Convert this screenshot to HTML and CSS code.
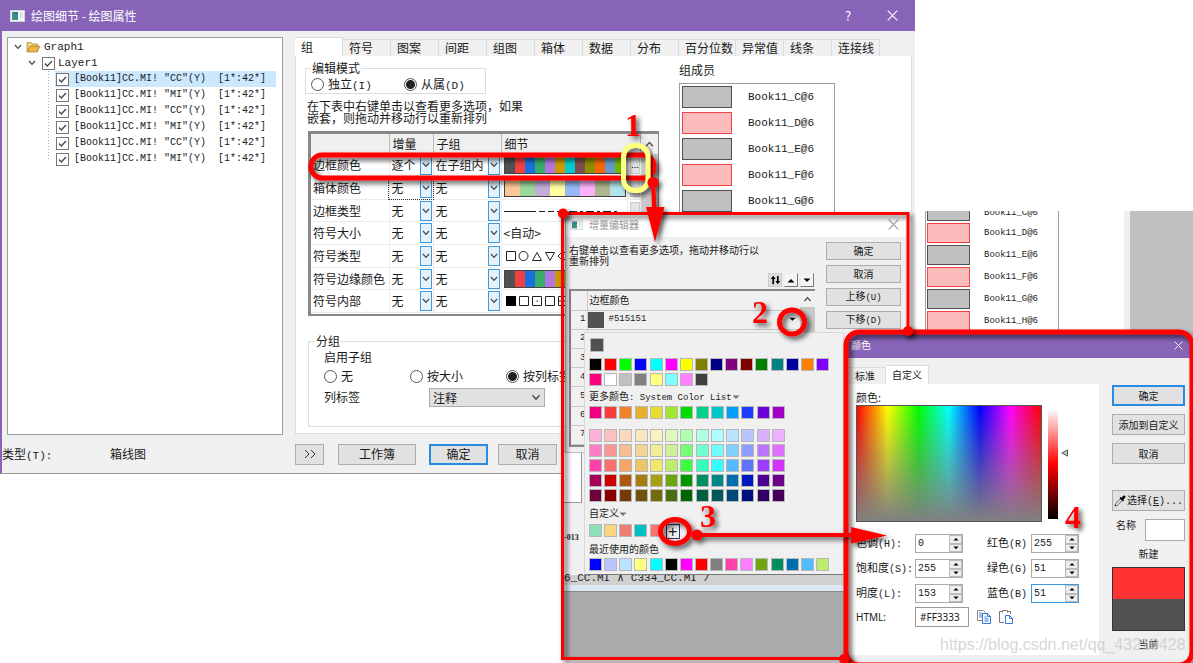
FILE: index.html
```html
<!DOCTYPE html>
<html lang="zh-CN">
<head>
<meta charset="utf-8">
<title>绘图细节 - 绘图属性</title>
<link rel="stylesheet" href="styles.css">
</head>
<body>
<svg width="0" height="0" class="defs" aria-hidden="true">
  <symbol id="chev" viewBox="0 0 8 6"><path d="M1 1l3 3.4L7 1" fill="none" stroke="#444" stroke-width="1.2"/></symbol>
  <symbol id="up" viewBox="0 0 8 5"><path d="M0.5 4.5L4 1l3.500 3.500z"/></symbol>
  <symbol id="down" viewBox="0 0 8 5"><path d="M0.5 0.500L4 4l3.500-3.500z"/></symbol>
  <symbol id="close" viewBox="0 0 11 11"><path d="M0.700 0.700l9.600 9.600M10.300 0.700L0.700 10.300" fill="none" stroke="currentColor" stroke-width="1.100"/></symbol>
  <symbol id="app" viewBox="0 0 15 12"><rect x=".5" y=".5" width="14" height="11" fill="#f4f8f6" stroke="#cfd6dc"/><rect x="2" y="2" width="6" height="8" fill="#3b8f86"/><path d="M2 2h6v3z" fill="#3a6fa0"/><path d="M10 3h3M10 5h3M10 7h3" stroke="#c7ccd0"/></symbol>
</svg>

<main class="desktop">
  <section class="window details">
    <header class="titlebar">
      <svg class="app-icon"><use href="#app"/></svg>
      <h1>绘图细节 - 绘图属性</h1>
      <button class="help" aria-label="帮助">?</button>
      <button class="close" aria-label="关闭"><svg><use href="#close"/></svg></button>
    </header>
    <div class="details-body">
      <div class="tree">
        <div class="node root"><svg class="twist"><use href="#chev"/></svg><svg class="folder" viewBox="0 0 13 11"><path d="M1 9.500V1.500h4l1 1.300h4.500V5" fill="#f6dc8a" stroke="#a8842c" stroke-width=".8"/><path d="M1 10l2.600-5.300h9L10.500 10z" fill="#f2b63c" stroke="#a8782c" stroke-width=".8"/></svg><span>Graph1</span></div>
        <div class="node layer"><svg class="twist"><use href="#chev"/></svg><label><input type="checkbox" checked>Layer1</label></div>
        <div class="leaves">
          <label class="node leaf selected"><input type="checkbox" checked>[Book11]CC.MI! "CC"(Y)&nbsp; [1*:42*]</label>
          <label class="node leaf"><input type="checkbox" checked>[Book11]CC.MI! "MI"(Y)&nbsp; [1*:42*]</label>
          <label class="node leaf"><input type="checkbox" checked>[Book11]CC.MI! "CC"(Y)&nbsp; [1*:42*]</label>
          <label class="node leaf"><input type="checkbox" checked>[Book11]CC.MI! "MI"(Y)&nbsp; [1*:42*]</label>
          <label class="node leaf"><input type="checkbox" checked>[Book11]CC.MI! "CC"(Y)&nbsp; [1*:42*]</label>
          <label class="node leaf"><input type="checkbox" checked>[Book11]CC.MI! "MI"(Y)&nbsp; [1*:42*]</label>
        </div>
      </div>
      <div class="pages">
        <nav class="tabs">
          <button class="active">组</button><button>符号</button><button>图案</button><button>间距</button><button>组图</button><button>箱体</button><button>数据</button><button>分布</button><button class="wide">百分位数</button><button>异常值</button><button>线条</button><button>连接线</button>
        </nav>
        <div class="page">
          <div class="page-main">
            <fieldset class="mode">
              <legend>编辑模式</legend>
              <label><input type="radio" name="mode"><span>独立<span class="m">(I)</span></span></label>
              <label><input type="radio" name="mode" checked><span>从属<span class="m">(D)</span></span></label>
            </fieldset>
            <p class="hint">在下表中右键单击以查看更多选项，如果<br>嵌套，则拖动并移动行以重新排列</p>
            <div class="sheet">
              <table>
                <colgroup><col class="c-name"><col class="c-inc"><col class="c-sub"><col class="c-detail"><col class="c-more"></colgroup>
                <thead><tr><th></th><th>增量</th><th>子组</th><th colspan="2">细节</th></tr></thead>
                <tbody>
                  <tr><td>边框颜色</td><td><span class="combo"><select aria-label="边框颜色增量"><option>逐个</option></select><svg><use href="#chev"/></svg></span></td><td><span class="combo"><select aria-label="边框颜色子组"><option>在子组内</option></select><svg><use href="#chev"/></svg></span></td><td><div class="stripes edge"></div></td><td><button class="more">...</button></td></tr>
                  <tr><td>箱体颜色</td><td class="focus"><span class="combo"><select aria-label="箱体颜色增量"><option>无</option></select><svg><use href="#chev"/></svg></span></td><td><span class="combo"><select aria-label="箱体颜色子组"><option>无</option></select><svg><use href="#chev"/></svg></span></td><td><div class="stripes fill"></div></td><td><button class="more"></button></td></tr>
                  <tr><td>边框类型</td><td><span class="combo"><select aria-label="边框类型增量"><option>无</option></select><svg><use href="#chev"/></svg></span></td><td><span class="combo"><select aria-label="边框类型子组"><option>无</option></select><svg><use href="#chev"/></svg></span></td><td><svg class="detail" viewBox="0 0 124 16"><path d="M0 8.500h32M35 8.500h6M44 8.500h6M53 8.500h4M59 8.500h3M65 8.500h8M76 8.500h3M82 8.500h8M93 8.500h3M99 8.500h8M110 8.500h3" stroke="#222"/></svg></td><td><button class="more"></button></td></tr>
                  <tr><td>符号大小</td><td><span class="combo"><select aria-label="符号大小增量"><option>无</option></select><svg><use href="#chev"/></svg></span></td><td><span class="combo"><select aria-label="符号大小子组"><option>无</option></select><svg><use href="#chev"/></svg></span></td><td>&lt;自动&gt;</td><td></td></tr>
                  <tr><td>符号类型</td><td><span class="combo"><select aria-label="符号类型增量"><option>无</option></select><svg><use href="#chev"/></svg></span></td><td><span class="combo"><select aria-label="符号类型子组"><option>无</option></select><svg><use href="#chev"/></svg></span></td><td><svg class="detail" viewBox="0 0 124 16"><g fill="none" stroke="#222"><path d="M2.500 3.500h9v9h-9zM28.500 12.500l4.500-8 4.500 8zM41.500 4.500h9l-4.500 8zM54 8l5-5 5 5-5 5z"/><circle cx="19.500" cy="8" r="4.500"/></g></svg></td><td></td></tr>
                  <tr><td>符号边缘颜色</td><td><span class="combo"><select aria-label="符号边缘颜色增量"><option>无</option></select><svg><use href="#chev"/></svg></span></td><td><span class="combo"><select aria-label="符号边缘颜色子组"><option>无</option></select><svg><use href="#chev"/></svg></span></td><td><div class="stripes edge"></div></td><td></td></tr>
                  <tr><td>符号内部</td><td><span class="combo"><select aria-label="符号内部增量"><option>无</option></select><svg><use href="#chev"/></svg></span></td><td><span class="combo"><select aria-label="符号内部子组"><option>无</option></select><svg><use href="#chev"/></svg></span></td><td><svg class="detail" viewBox="0 0 124 16"><path d="M2 3h10v10H2z"/><path d="M15.500 3.500h9v9h-9zM28.500 3.500h9v9h-9zM41.500 3.500h9v9h-9zM54.500 3.500h9v9h-9zM54.500 8h9M32.500 8h1.500" fill="none" stroke="#222"/></svg></td><td></td></tr>
                </tbody>
              </table>
              <div class="scroll"><svg><use href="#chev"/></svg></div>
            </div>
            <fieldset class="grouping">
              <legend>分组</legend>
              <p>启用子组</p>
              <div class="choices">
                <label><input type="radio" name="sub">无</label>
                <label><input type="radio" name="sub">按大小</label>
                <label><input type="radio" name="sub" checked>按列标签</label>
              </div>
              <div class="label-row"><label for="col-label">列标签</label><span class="combo-flat"><select id="col-label"><option>注释</option></select><svg><use href="#chev"/></svg></span></div>
            </fieldset>
          </div>
          <aside class="members">
            <h2>组成员</h2>
            <ul>
              <li><i></i>Book11_C@6</li><li><i class="pink"></i>Book11_D@6</li><li><i></i>Book11_E@6</li><li><i class="pink"></i>Book11_F@6</li><li><i></i>Book11_G@6</li>
            </ul>
          </aside>
        </div>
      </div>
    </div>
    <footer class="details-foot">
      <span class="type">类型<span class="m">(T):</span></span><span class="type-value">箱线图</span>
      <button class="btn expand" aria-label="展开"><svg viewBox="0 0 14 10"><path d="M2 1l4 4-4 4M8 1l4 4-4 4" fill="none" stroke="#333"/></svg></button>
      <button class="btn book">工作簿</button>
      <button class="btn primary">确定</button>
      <button class="btn">取消</button>
    </footer>
  </section>

  <section class="capture">
    <div class="side-list">
      <ul>
        <li><i></i>Book11_C@6</li><li><i class="pink"></i>Book11_D@6</li><li><i></i>Book11_E@6</li><li><i class="pink"></i>Book11_F@6</li><li><i></i>Book11_G@6</li><li><i class="pink"></i>Book11_H@6</li>
      </ul>
    </div>
    <div class="workspace">
      <div class="pane"></div>
      <span class="axis">-013</span>
      <div class="sheet-tabs"><span>6_CC.MI</span><span>∧</span><span>C334_CC.MI</span><span>/</span></div>
    </div>

    <div class="window editor">
      <header class="editor-title"><svg class="app-icon"><use href="#app"/></svg><h2>增量编辑器</h2><button class="close" aria-label="关闭"><svg><use href="#close"/></svg></button></header>
      <div class="editor-body">
        <div class="editor-main">
          <p>右键单击以查看更多选项，拖动并移动行以<br>重新排列</p>
          <div class="tools">
            <button class="on" aria-label="反转"><svg viewBox="0 0 12 10"><path d="M3.500 9.500V3M8.500 0.500V7" stroke="#000" stroke-width="1.800"/><path d="M0.800 4l2.700-3.700L6.200 4zM5.800 6l2.700 3.700L11.200 6z"/></svg></button>
            <button aria-label="上移一行"><svg><use href="#up"/></svg></button>
            <button aria-label="下移一行"><svg><use href="#down"/></svg></button>
          </div>
          <div class="list">
            <table>
              <thead><tr><th class="n"></th><th>边框颜色</th></tr></thead>
              <tbody>
                <tr><td class="n">1</td><td><div class="pick"><i></i><span>#515151</span><svg><use href="#down"/></svg></div></td></tr>
                <tr><td class="n">2</td><td></td></tr><tr><td class="n">3</td><td></td></tr><tr><td class="n">4</td><td></td></tr><tr><td class="n">5</td><td></td></tr><tr><td class="n">6</td><td></td></tr><tr><td class="n">7</td><td></td></tr>
              </tbody>
            </table>
            <div class="scroll"><svg><use href="#chev"/></svg></div>
          </div>
        </div>
        <div class="editor-actions">
          <button class="btn">确定</button><button class="btn">取消</button><button class="btn"><span>上移<span class="m">(U)</span></span></button><button class="btn"><span>下移<span class="m">(D)</span></span></button>
        </div>
      </div>
    </div>

    <div class="palette">
      <div class="sw current" data-colors="#515151"></div>
      <div class="sw basic" data-colors="#000000 #ff0000 #00ff00 #0000ff #00ffff #ff00ff #ffff00 #808000 #000080 #800080 #800000 #008000 #008080 #0000a0 #ff8000 #8000ff #ff0080 #ffffff #c0c0c0 #808080 #ffff80 #80ffff #ff80ff #404040"></div>
      <p>更多颜色<span class="m">: System Color List</span><svg><use href="#down"/></svg></p>
      <div class="sw thirteen" data-colors="#f00082 #fa3c3c #f08228 #e6af2d #e6dc32 #a0e632 #00dc00 #00d28c #00c8c8 #00a0ff #1e3cff #6e00dc #a000c8"></div>
      <div class="sw thirteen shades" data-colors="#ffb0dc #fdbfbf #fbd9bf #f8e7bf #f8f4bf #e0f8bf #b0ffb0 #b0ffe2 #b0ffff #b8e4ff #bac4ff #d8b0ff #efb0ff #ff7cc4 #fb9696 #f8be92 #f3d696 #f3ed98 #cff298 #74ff74 #70ffcf #70ffff #80d0ff #8e9eff #ba74ff #e070ff #ff42ab #fc6e6e #f5a465 #eec668 #eee86c #bced6c #3cff3c #32ffbd #32ffff #50bbff #5e74ff #9c3cff #d632ff #a60058 #cc0000 #b0570e #a67b10 #a6a012 #6ea612 #009600 #008e60 #008888 #006eb0 #0018c0 #4b0096 #6c0088 #6e003b #880000 #763a09 #6f520b #6f6b0c #496f0c #006400 #005f40 #005a5a #004975 #001080 #320064 #48005a"></div>
      <p>自定义<svg><use href="#down"/></svg></p>
      <div class="sw own" data-colors="#8ee0bb #fdd57e #ee7b74 #00c0c4 #f8756c"></div>
      <p class="recent">最近使用的颜色</p>
      <div class="sw" data-colors="#0000ff #bac4ff #b8e4ff #ffff80 #00ffff #000000 #ff00ff #ff0000 #808080 #ff42ab #ff80ff #6ea612 #008e60 #006eb0 #50bbff #bced6c"></div>
    </div>
  </section>

  <section class="window color">
    <header class="titlebar"><h2>颜色</h2><button class="close" aria-label="关闭"><svg><use href="#close"/></svg></button></header>
    <div class="color-body">
      <div class="color-pages">
        <nav class="tabs"><button>标准</button><button class="active">自定义</button></nav>
        <div class="color-page">
          <p>颜色:</p>
          <div class="pickers"><div class="spectrum"></div><div class="luma"></div><svg class="marker" viewBox="0 0 7 8"><path d="M6.500 .8v6.400L.8 4z" fill="#bbb" stroke="#444" stroke-width=".8"/></svg></div>
          <div class="fields">
            <label for="hue">色调<span class="m">(H):</span></label><span class="spin"><input id="hue" value="0"><span><button aria-label="加"><svg><use href="#up"/></svg></button><button aria-label="减"><svg><use href="#down"/></svg></button></span></span>
            <label for="red">红色<span class="m">(R)</span></label><span class="spin"><input id="red" value="255"><span><button aria-label="加"><svg><use href="#up"/></svg></button><button aria-label="减"><svg><use href="#down"/></svg></button></span></span>
            <label for="sat">饱和度<span class="m">(S):</span></label><span class="spin"><input id="sat" value="255"><span><button aria-label="加"><svg><use href="#up"/></svg></button><button aria-label="减"><svg><use href="#down"/></svg></button></span></span>
            <label for="green">绿色<span class="m">(G)</span></label><span class="spin"><input id="green" value="51"><span><button aria-label="加"><svg><use href="#up"/></svg></button><button aria-label="减"><svg><use href="#down"/></svg></button></span></span>
            <label for="lum">明度<span class="m">(L):</span></label><span class="spin"><input id="lum" value="153"><span><button aria-label="加"><svg><use href="#up"/></svg></button><button aria-label="减"><svg><use href="#down"/></svg></button></span></span>
            <label for="blue">蓝色<span class="m">(B)</span></label><span class="spin active"><input id="blue" value="51"><span><button aria-label="加"><svg><use href="#up"/></svg></button><button aria-label="减"><svg><use href="#down"/></svg></button></span></span>
          </div>
          <div class="html-row"><label for="html">HTML:</label><input id="html" value="#FF3333">
            <button aria-label="复制"><svg viewBox="0 0 14 14"><g fill="#fff"><path d="M.5.500h6l2 2v8h-8z" stroke="#8a8a8a"/><path d="M2 3h3M2 5h3M2 7h3" stroke="#4a86d8"/><path d="M5.500 3.500h5l3 3v7h-8z" stroke="#2f77dc"/><path d="M10.500 3.500v3h3M7.500 7h2M7.500 9h4M7.500 11h4" fill="none" stroke="#2f77dc"/></g></svg></button>
            <button aria-label="粘贴"><svg viewBox="0 0 14 14"><path d="M3 1.500H.5v11H5M9 1.500h2.500V4M3.500 2.500V.5h5v2" fill="none" stroke="#777"/><path d="M6.500 5.500h4l3 3v5h-7z" fill="#fff" stroke="#2f77dc"/><path d="M10.500 5.500v3h3" fill="none" stroke="#2f77dc"/></svg></button>
          </div>
        </div>
      </div>
      <div class="color-side">
        <button class="btn primary">确定</button>
        <button class="btn">添加到自定义</button>
        <button class="btn">取消</button>
        <button class="btn dropper"><svg viewBox="0 0 12 12"><path d="M1 11l.6-2.200L6.500 4l1.500 1.500-4.800 4.900z" fill="#fff" stroke="#333" stroke-width=".9"/><path d="M5.500 3l3.500 3.500 1-1-.7-.8 2-2.200c.9-1-.8-2.700-1.800-1.800L7.300 2.700l-.8-.7z"/></svg><span>选择<span class="m">(<u>E</u>)...</span></span></button>
        <div class="name-row"><label for="name">名称</label><input id="name"></div>
        <p>新建</p>
        <div class="compare"><div></div><div></div></div>
        <p>当前</p>
      </div>
    </div>
  </section>

  <svg class="marks" viewBox="0 0 1193 663" aria-hidden="true">
    <defs><filter id="sh" x="-20%" y="-20%" width="140%" height="140%"><feDropShadow dx="3" dy="3" stdDeviation="2.500" flood-color="#000" flood-opacity=".65"/></filter></defs>
    <g filter="url(#sh)" fill="none" stroke="#f00">
      <rect x="311" y="155" width="343" height="23" rx="11" stroke-width="5"/>
      <path d="M650 158q7 9 0 18z" fill="#f00"/>
      <path d="M846 658.500H562.500v-445H908V331" stroke-width="3"/>
      <ellipse cx="792" cy="322" rx="12.500" ry="12" stroke-width="5"/>
      <ellipse cx="675" cy="531.500" rx="14.500" ry="12" stroke-width="5"/>
      <rect x="846" y="332" width="346" height="333" rx="13" stroke-width="5"/>
    </g>
    <rect filter="url(#sh)" x="623.500" y="145.500" width="24.500" height="45" rx="11" fill="none" stroke="#ffff80" stroke-width="5"/>
    <g filter="url(#sh)" fill="#f00" stroke="none">
      <circle cx="653" cy="182.500" r="5.500"/><path d="M651 182h4l1.500 25h8L655 242l-9-35h6z"/>
      <circle cx="563" cy="213.500" r="5"/><circle cx="908" cy="331" r="5"/><circle cx="844" cy="659" r="5"/>
      <circle cx="697" cy="535" r="5.500"/><path d="M697 533h154v-6l36 8.500-36 8V537H697z"/>
      <g class="digits"><text x="625" y="136">1</text><text x="752" y="323">2</text><text x="700" y="527">3</text><text x="1065" y="528">4</text></g>
    </g>
  </svg>
  <span class="watermark">https://blog.csdn.net/qq_43210428</span>
</main>
<script src="script.js"></script>
</body>
</html>
```
FILE: script.js
```js
document.querySelectorAll('.sw').forEach(function (box) {
  box.dataset.colors.split(' ').forEach(function (c) {
    var b = document.createElement('button');
    b.style.backgroundColor = c;
    b.setAttribute('aria-label', c);
    box.appendChild(b);
  });
  if (box.classList.contains('own')) {
    var add = document.createElement('button');
    add.className = 'add';
    add.textContent = '+';
    box.appendChild(add);
  }
});
```
FILE: styles.css
```css
* { box-sizing: border-box; }
body { margin: 0; background: #fff; color: #1a1a1a; font: 12px/16px "Noto Sans CJK SC", sans-serif; }
h1, h2, p, ul { margin: 0; padding: 0; font-weight: normal; font-size: inherit; list-style: none; }
button, input, select { font: inherit; color: inherit; margin: 0; padding: 0; border: 0; border-radius: 0; background: none; }
.m { font-family: "Liberation Mono", monospace; font-size: 11px; line-height: 10px; }
.defs { position: absolute; }
.desktop { position: relative; min-height: 100vh; overflow: hidden; }
.window { position: absolute; background: #f0f0f0; display: flex; flex-direction: column; }
.titlebar { display: flex; align-items: center; background: #8764b8; color: #fff; }
.close { display: flex; }
.close svg { width: 11px; height: 11px; }
.app-icon { width: 15px; height: 12px; }
.btn { height: 21px; border: 1px solid #adadad; background: #e1e1e1; display: flex; align-items: center; justify-content: center; white-space: nowrap; }
.btn.primary { border: 2px solid #2a8ae0; }

input[type=radio], input[type=checkbox] { appearance: none; flex: none; background: #fff; }
input[type=radio] { width: 13px; height: 13px; border: 1px solid #555; border-radius: 50%; }
input[type=radio]:checked { background: radial-gradient(circle, #222 0 4px, #fff 5px); }
input[type=checkbox] { width: 13px; height: 13px; border: 1px solid #777; background: #fff url("data:image/svg+xml,%3Csvg xmlns='http://www.w3.org/2000/svg' viewBox='0 0 11 11'%3E%3Cpath d='M2 5.500l2.300 2.500L9 3' fill='none' stroke='%23444' stroke-width='1.300'/%3E%3C/svg%3E") center / 11px; }
label { display: flex; align-items: center; gap: 4px; white-space: nowrap; }

.details { left: 0; top: 0; width: 915px; height: 474px; border-left: 2px solid #8764b8; border-bottom: 1px solid #999; }
.details .titlebar { height: 31px; padding: 0 17px 0 8px; }
.details .titlebar h1 { margin-left: 6px; flex: 1; }
.help { width: 12px; margin-right: 33px; font-size: 13px; }
.details-body { flex: 1; display: flex; gap: 12px; padding: 6px 3px 0 5px; min-height: 0; }
.tree { width: 276px; height: 398px; border: 1px solid #9a9ca8; background: #fff; padding: 1px 6px; font-family: "Liberation Mono", monospace; font-size: 10px; }
.node { display: flex; align-items: center; height: 16px; }
.twist { width: 8px; height: 6px; }
.root { gap: 4px; font-size: 11px; }
.root .folder { width: 14px; height: 12px; }
.layer { padding-left: 14px; gap: 6px; font-size: 11px; }
.layer label { gap: 3px; }
.leaves { margin-left: 34px; padding-left: 7px; background: repeating-linear-gradient(#aaa 0 1px, transparent 1px 3px) 0 0 / 1px 88px no-repeat; }
.leaf { gap: 5px; padding-left: 1px; }
.selected { background: #cce8ff; }

.pages { flex: 1; display: flex; flex-direction: column; }
.tabs { display: flex; align-items: flex-end; }
.tabs button { height: 17px; border: 1px solid #dcdcdc; border-width: 1px 1px 0 0; text-align: left; }
.tabs .active { background: #fff; height: 19px; }
.details .tabs { padding-right: 32px; }
.details .tabs button { flex: 1; padding-left: 6px; white-space: nowrap; }
.details .tabs .wide { flex: none; width: 57px; }
.page { display: flex; gap: 20px; height: 378px; background: #fff; border: 1px solid #dcdcdc; border-top: 0; padding: 4px 10px 0 9px; }
.page-main { width: 354px; display: flex; flex-direction: column; }
fieldset { margin: 0; border: 1px solid #dcdcdc; min-width: 0; }
legend { padding: 0 1px; margin-left: 0; }
.mode { display: flex; gap: 33px; width: 181px; height: 34px; padding: 0 5px; }
.mode legend { height: 16px; }
.mode label:first-of-type { width: 60px; }
.hint { line-height: 12px; padding: 6px 2px 0; }
.sheet { display: flex; width: 351px; height: 185px; margin: 7px 0 0 3px; border: 2px solid #888; border-width: 3px 1px 2px 3px; background: #fff; }
.sheet table { flex: none; width: 330px; table-layout: fixed; border-collapse: collapse; height: 179px; }
.c-name { width: 78px; } .c-inc { width: 44px; } .c-sub { width: 68px; } .c-more { width: 13px; }
.sheet th { height: 20px; background: #f0f0f0; text-align: left; font-weight: normal; padding: 0 3px; border-right: 1px solid #bbb; }
.sheet td { height: 22px; padding: 0 1px 0 2px; border: 1px solid #ececec; border-width: 0 1px 1px 0; white-space: nowrap; }
.sheet .focus { outline: 1px dotted #333; }
.combo { display: grid; grid-template-columns: 1fr 13px; align-items: center; }
.combo select { appearance: none; grid-area: 1 / 1 / 2 / 3; width: 100%; height: 20px; background: linear-gradient(#e5f1fb, #e5f1fb) right 1px center / 10px 18px no-repeat, linear-gradient(#3c9ae0, #3c9ae0) right / 12px 20px no-repeat; }
.combo svg { grid-area: 1 / 2; width: 8px; height: 6px; margin-left: 3px; pointer-events: none; }
.stripes { height: 18px; border: 1px solid #444; }
.edge { background: linear-gradient(90deg, #515151 8%, #f14040 8% 17%, #1a6fdf 17% 25%, #37ad6b 25% 33%, #b177de 33% 42%, #cc9900 42% 50%, #00cbcc 50% 58%, #7d4e4e 58% 67%, #8e8e00 67% 75%, #fb6501 75% 83%, #6699cc 83% 92%, #6fb802 92%); }
.fill { background: linear-gradient(90deg, #fdc897 12.5%, #9bd89b 12.5% 25%, #c1acd8 25% 37.5%, #ffffa0 37.5% 50%, #97b8f5 50% 62.5%, #fdb0f8 62.5% 75%, #b0b591 75% 87.5%, #b2e2ea 87.5%); }
.detail { display: block; width: 124px; height: 16px; }
.more { display: block; width: 10px; height: 18px; background: #e4e4e4; border: 1px solid #ccc; font-size: 9px; line-height: 8px; }
.scroll { flex: none; width: 17px; background: #c9c9c9; text-align: center; }
.scroll svg { display: block; width: 100%; height: 20px; padding: 6px 4px; background: #f0f0f0; transform: rotate(180deg); }
.grouping { width: 354px; height: 94px; margin: 17px 0 0 3px; padding: 0 15px; }
.grouping legend { margin-left: -9px; height: 16px; }
.choices { display: flex; height: 20px; margin-top: 1px; }
.choices label:nth-child(1) { width: 86px; }
.choices label:nth-child(2) { width: 96px; }
.label-row { display: flex; height: 22px; }
.label-row label { width: 105px; }
.combo-flat { display: grid; width: 116px; height: 19px; margin-top: 2px; align-items: center; border: 1px solid #adadad; background: #e1e1e1; }
.combo-flat select { appearance: none; grid-area: 1 / 1; width: 100%; padding-left: 3px; }
.combo-flat svg { grid-area: 1 / 1; justify-self: end; width: 10px; height: 7px; margin-right: 3px; pointer-events: none; }
.members h2 { margin-top: 2px; }
.members ul { width: 156px; margin-top: 5px; border: 1px solid #9a9ca8; height: 190px; padding: 2px; overflow: hidden; font: 11px/22px "Liberation Mono", monospace; display: flex; flex-direction: column; gap: 4px; }
.members li, .side-list li { display: flex; align-items: center; gap: 16px; }
.members i { width: 50px; height: 22px; border: 1px solid #515151; background: #c0c0c0; }
.members .pink, .side-list .pink { background: #fcbcbc; border-color: #f04444; }
.details-foot { display: flex; align-items: center; height: 38px; }
.type { width: 108px; }
.type-value { width: 185px; }
.expand { width: 29px; margin-right: 14px; }
.expand svg { width: 14px; height: 10px; }
.book { width: 78px; margin-right: 13px; }
.details-foot .primary { width: 59px; margin-right: 10px; }
.details-foot .btn:last-child { width: 59px; }

.capture { position: absolute; left: 562px; right: 0; top: 211px; bottom: 0; font-size: 10px; line-height: 10px; overflow: hidden; }
.side-list { position: absolute; left: 349px; right: 0; top: 0; height: 130px; padding-left: 14px; background: linear-gradient(90deg, #f0f0f0 4px, #fff 4px 213px, #f0f0f0 213px 219px, #c0c0c0 219px); }
.side-list ul { width: 134px; height: 130px; border: 1px solid #9a9ca8; border-width: 0 1px; font: 9px/18px "Liberation Mono", monospace; padding-left: 1px; }
.side-list li { height: 22px; gap: 14px; }
.side-list li:first-child { height: 11px; align-items: flex-end; }
.side-list li:first-child i { margin-bottom: 1px; }
.side-list i { width: 43px; height: 20px; border: 1px solid #515151; background: #c0c0c0; flex: none; }
.workspace { position: absolute; left: 0; top: 240px; width: 346px; height: 208px; background: linear-gradient(#f0f0f0 0 124px, #d0d0d0 124px 134px, #dce8f4 134px 140px, #888 140px 141px, #ababab 141px); }
.pane { height: 52px; width: 20px; background: #fff; border: 1px solid #999; }
.axis { display: block; padding: 30px 2px 0; font: bold 8px/9px "Liberation Serif", serif; }
.sheet-tabs { display: flex; gap: 7px; padding: 30px 2px 0; font: 11px/12px "Liberation Mono", monospace; }

.editor { left: 3px; top: 3px; width: 343px; height: 239px; border: 1px solid #bbb; }
.editor-title { display: flex; align-items: center; gap: 6px; height: 22px; padding: 0 8px 3px 4px; background: #fff; color: #999; }
.editor-title h2 { flex: 1; }
.editor-title .app-icon { width: 13px; height: 10px; }
.editor-body { display: flex; justify-content: space-between; padding: 5px 6px 0 3px; }
.editor-main { width: 246px; }
.editor-main p { line-height: 11px; padding-top: 2px; }
.tools { display: flex; justify-content: flex-end; gap: 2px; padding: 7px 1px 2px 0; }
.tools button { width: 14px; height: 14px; display: flex; align-items: center; justify-content: center; background: #f4f4f4; border: 1px solid #777; border-color: #eee #777 #777 #eee; }
.tools .on { background: #ddd; border-color: #ccc; }
.tools svg { width: 8px; height: 5px; }
.tools .on svg { width: 11px; height: 10px; }
.list { display: flex; height: 158px; border: 1px solid #888; border-width: 2px 0 2px 2px; background: #f0f0f0; }
.list table { flex: 1; border-collapse: collapse; table-layout: fixed; }
.list th, .list td { height: 19px; padding: 0; text-align: left; font-weight: normal; border-bottom: 1px solid #c8c8c8; }
.list th { padding-left: 2px; }
.list .n { width: 16px; padding: 0 1px; text-align: right; border-right: 1px solid #ccc; font: 9px/9px "Liberation Mono", monospace; }
.list .scroll { width: 15px; }
.list .scroll svg { height: 16px; padding: 5px 3px; }
.pick { display: flex; align-items: center; gap: 5px; padding: 0 4px 0 0; font: 9px/9px "Liberation Mono", monospace; }
.pick i { width: 16px; height: 16px; background: #515151; }
.pick span { flex: 1; }
.pick svg { width: 7px; height: 5px; }
.editor-actions { display: flex; flex-direction: column; gap: 5px; width: 75px; }
.editor-actions .btn { height: 18px; }
.editor-actions .m, .palette .m { font-size: 9px; }

.palette { position: absolute; left: 22px; top: 121px; width: 260px; height: 243px; padding: 5px 12px 0 4px; background: #f0f0f0; border: 1px solid #d8d8d8; border-bottom: 1px solid #777; }
.sw { display: grid; grid-template-columns: repeat(16, 1fr); row-gap: 2px; }
.sw button { width: 13px; height: 13px; border: 1px solid #b8b8b8; }
.sw.current { padding: 0 1px; margin-bottom: 6px; }
.sw.current button { width: 14px; height: 14px; }
.sw.thirteen { grid-template-columns: repeat(13, 1fr); width: 198px; }
.shades { margin-top: 10px; }
.palette p { height: 20px; line-height: 20px; white-space: nowrap; }
.palette p svg { width: 8px; height: 5px; fill: #777; }
.shades + p { padding-top: 1px; height: 22px; }
.sw.own { height: 15px; }
.sw.own .add { background: #f0f0f0; border: 1px solid #336; font: 16px/11px "Liberation Sans", sans-serif; width: 14px; height: 15px; margin-left: 1px; }
.palette .recent { height: 19px; }

.color { left: 846px; top: 332px; width: 346px; height: 334px; border-radius: 13px; overflow: hidden; font-size: 10px; line-height: 12px; }
.color .m { font-size: 10px; }
.color .titlebar { height: 26px; padding: 0 9px 0 5px; justify-content: space-between; }
.color .close svg { width: 9px; height: 9px; }
.color-body { display: flex; justify-content: space-between; padding: 7px 7px 0 3px; }
.color-pages { width: 250px; }
.color .tabs button { padding-left: 6px; width: 37px; }
.color .tabs .active { width: 43px; }
.color-page { background: #fff; padding: 6px 6px 0 7px; height: 271px; font-size: 11px; }
.color-page p { height: 15px; line-height: 15px; }
.pickers { display: flex; align-items: center; gap: 3px; }
.spectrum { width: 186px; height: 117px; border: 1px solid #555; background: linear-gradient(rgba(128,128,128,0), #808080), linear-gradient(90deg, #f00, #ff0, #0f0, #0ff, #00f, #f0f, #f00); }
.luma { width: 10px; height: 110px; margin-left: 3px; background: linear-gradient(#fff, #f00 50%, #000); }
.marker { width: 7px; height: 8px; margin-bottom: 22px; }
.fields { display: grid; grid-template-columns: 59px 72px 44px 48px; row-gap: 6px; margin-top: 12px; }
.fields label { display: block; line-height: 17px; }
.spin { display: flex; width: 48px; height: 19px; border: 1px solid #aaa; }
.spin.active { border-color: #3c9ae0; }
.spin input { width: 33px; padding-left: 2px; font: 10px/12px "Liberation Mono", monospace; }
.spin > span { display: flex; flex-direction: column; width: 13px; }
.spin button { flex: 1; display: flex; align-items: center; justify-content: center; background: #eee; border: 1px solid #bbb; min-height: 0; }
.spin svg { width: 6px; height: 4px; }
.html-row { display: flex; align-items: center; gap: 8px; margin-top: 4px; }
.html-row label { width: 51px; font: 10px/12px "Noto Sans", sans-serif; }
.html-row input { width: 54px; height: 20px; border: 1px solid #999; padding-left: 4px; font: 10px/12px "Noto Sans", sans-serif; }
.html-row button, .html-row svg { display: block; width: 14px; height: 14px; }
.color-side { width: 73px; padding-top: 20px; display: flex; flex-direction: column; }
.color-side .btn { margin-bottom: 8px; }
.color-side .dropper { margin-top: 18px; gap: 1px; }
.dropper svg { width: 12px; height: 12px; }
.name-row { display: flex; justify-content: space-between; padding-left: 4px; }
.name-row label { align-items: flex-start; }
.name-row input { width: 40px; height: 22px; border: 1px solid #aaa; background: #fff; }
.color-side p { height: 26px; line-height: 26px; text-align: center; }
.compare { height: 64px; border: 1px solid #333; display: grid; grid-template-rows: 1fr 1fr; }
.compare div:first-child { background: #ff3333; }
.compare div:last-child { background: #515151; }

.marks { position: absolute; left: 0; top: 0; width: 1193px; height: 663px; pointer-events: none; }
.digits { font: bold 32px "Liberation Serif", serif; }
.watermark { position: absolute; left: 940px; top: 636px; font: 16px/18px "Liberation Sans", sans-serif; color: rgba(200, 200, 200, .75); white-space: nowrap; }
```
